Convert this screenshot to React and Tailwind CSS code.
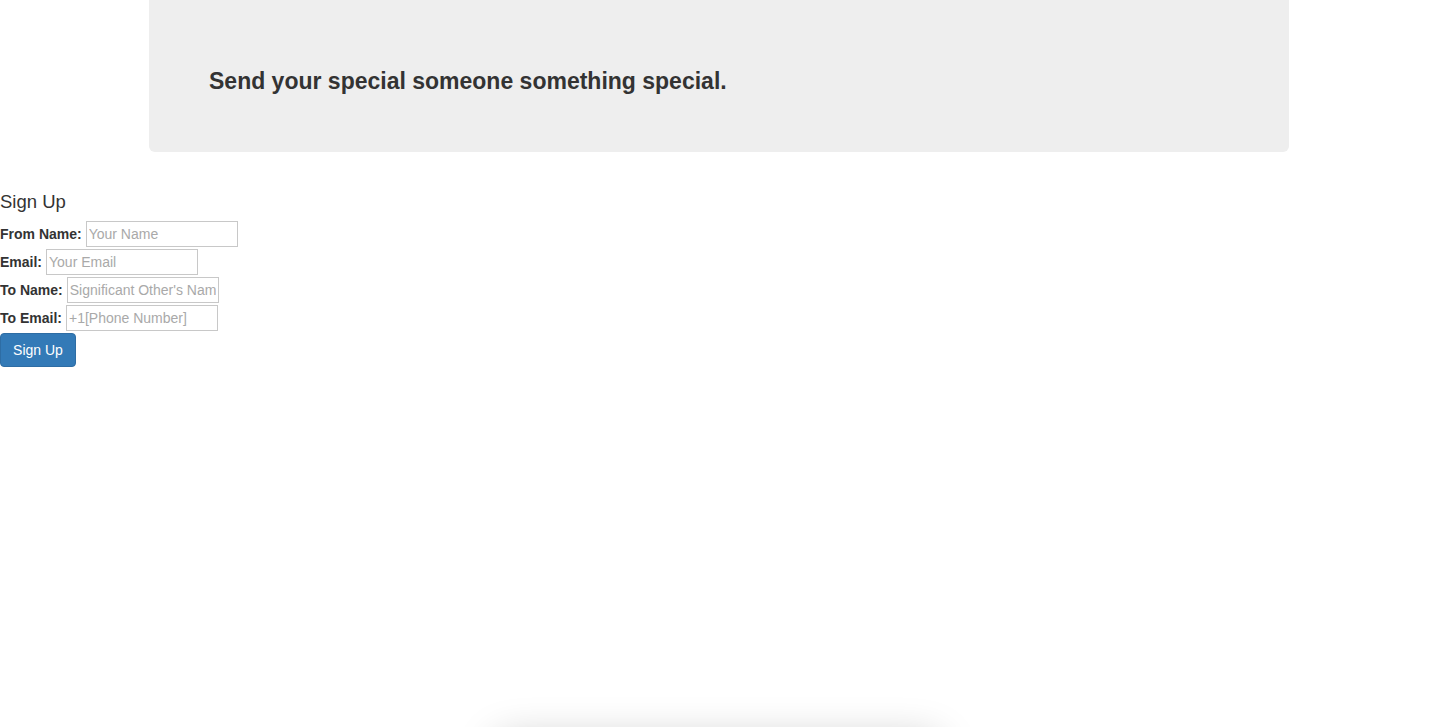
export default function App() {
  const font = { fontFamily: '"Liberation Sans", Arial, Helvetica, sans-serif' };
  const rows = [
    { label: "From Name:", ph: "Your Name" },
    { label: "Email:", ph: "Your Email" },
    { label: "To Name:", ph: "Significant Other's Name" },
    { label: "To Email:", ph: "+1[Phone Number]" },
  ];
  return (
    <div className="relative min-h-[727px] bg-white text-[#333] overflow-hidden" style={font}>
      <div className="ml-[149px] w-[1140px] rounded-b-[6px] bg-[#eeeeee] px-[60px] pt-[68px] pb-[58px]">
        <h3 className="text-[23px] leading-[26px] font-bold text-[#333]">
          Send your special someone something special.
        </h3>
      </div>
      <div className="mt-[40px]">
        <h4 className="text-[18.5px] leading-[20px] font-medium">Sign Up</h4>
        <form className="mt-[9px] flex flex-col gap-[2px]" onSubmit={(e) => e.preventDefault()}>
          {rows.map((r) => (
            <div key={r.label} className="flex items-center h-[26px]">
              <label className="text-[14px] font-bold leading-[20px] mr-[4px]">{r.label}</label>
              <input
                type="text"
                placeholder={r.ph}
                className="w-[152px] h-[26px] border border-[#c8c8c8] px-[2px] text-[14px] text-[#555] placeholder:text-[#a9a9a9] outline-none"
              />
            </div>
          ))}
          <div>
            <button
              type="submit"
              className="h-[34px] w-[76px] rounded-[4px] bg-[#337ab7] border border-[#2e6da4] text-white text-[14px] leading-[20px]"
            >
              Sign Up
            </button>
          </div>
        </form>
      </div>
      <div className="absolute left-[495px] top-[738px] h-[40px] w-[445px] rounded-[14px] bg-white shadow-[0_0_40px_rgba(0,0,0,0.22)]" />
    </div>
  );
}
